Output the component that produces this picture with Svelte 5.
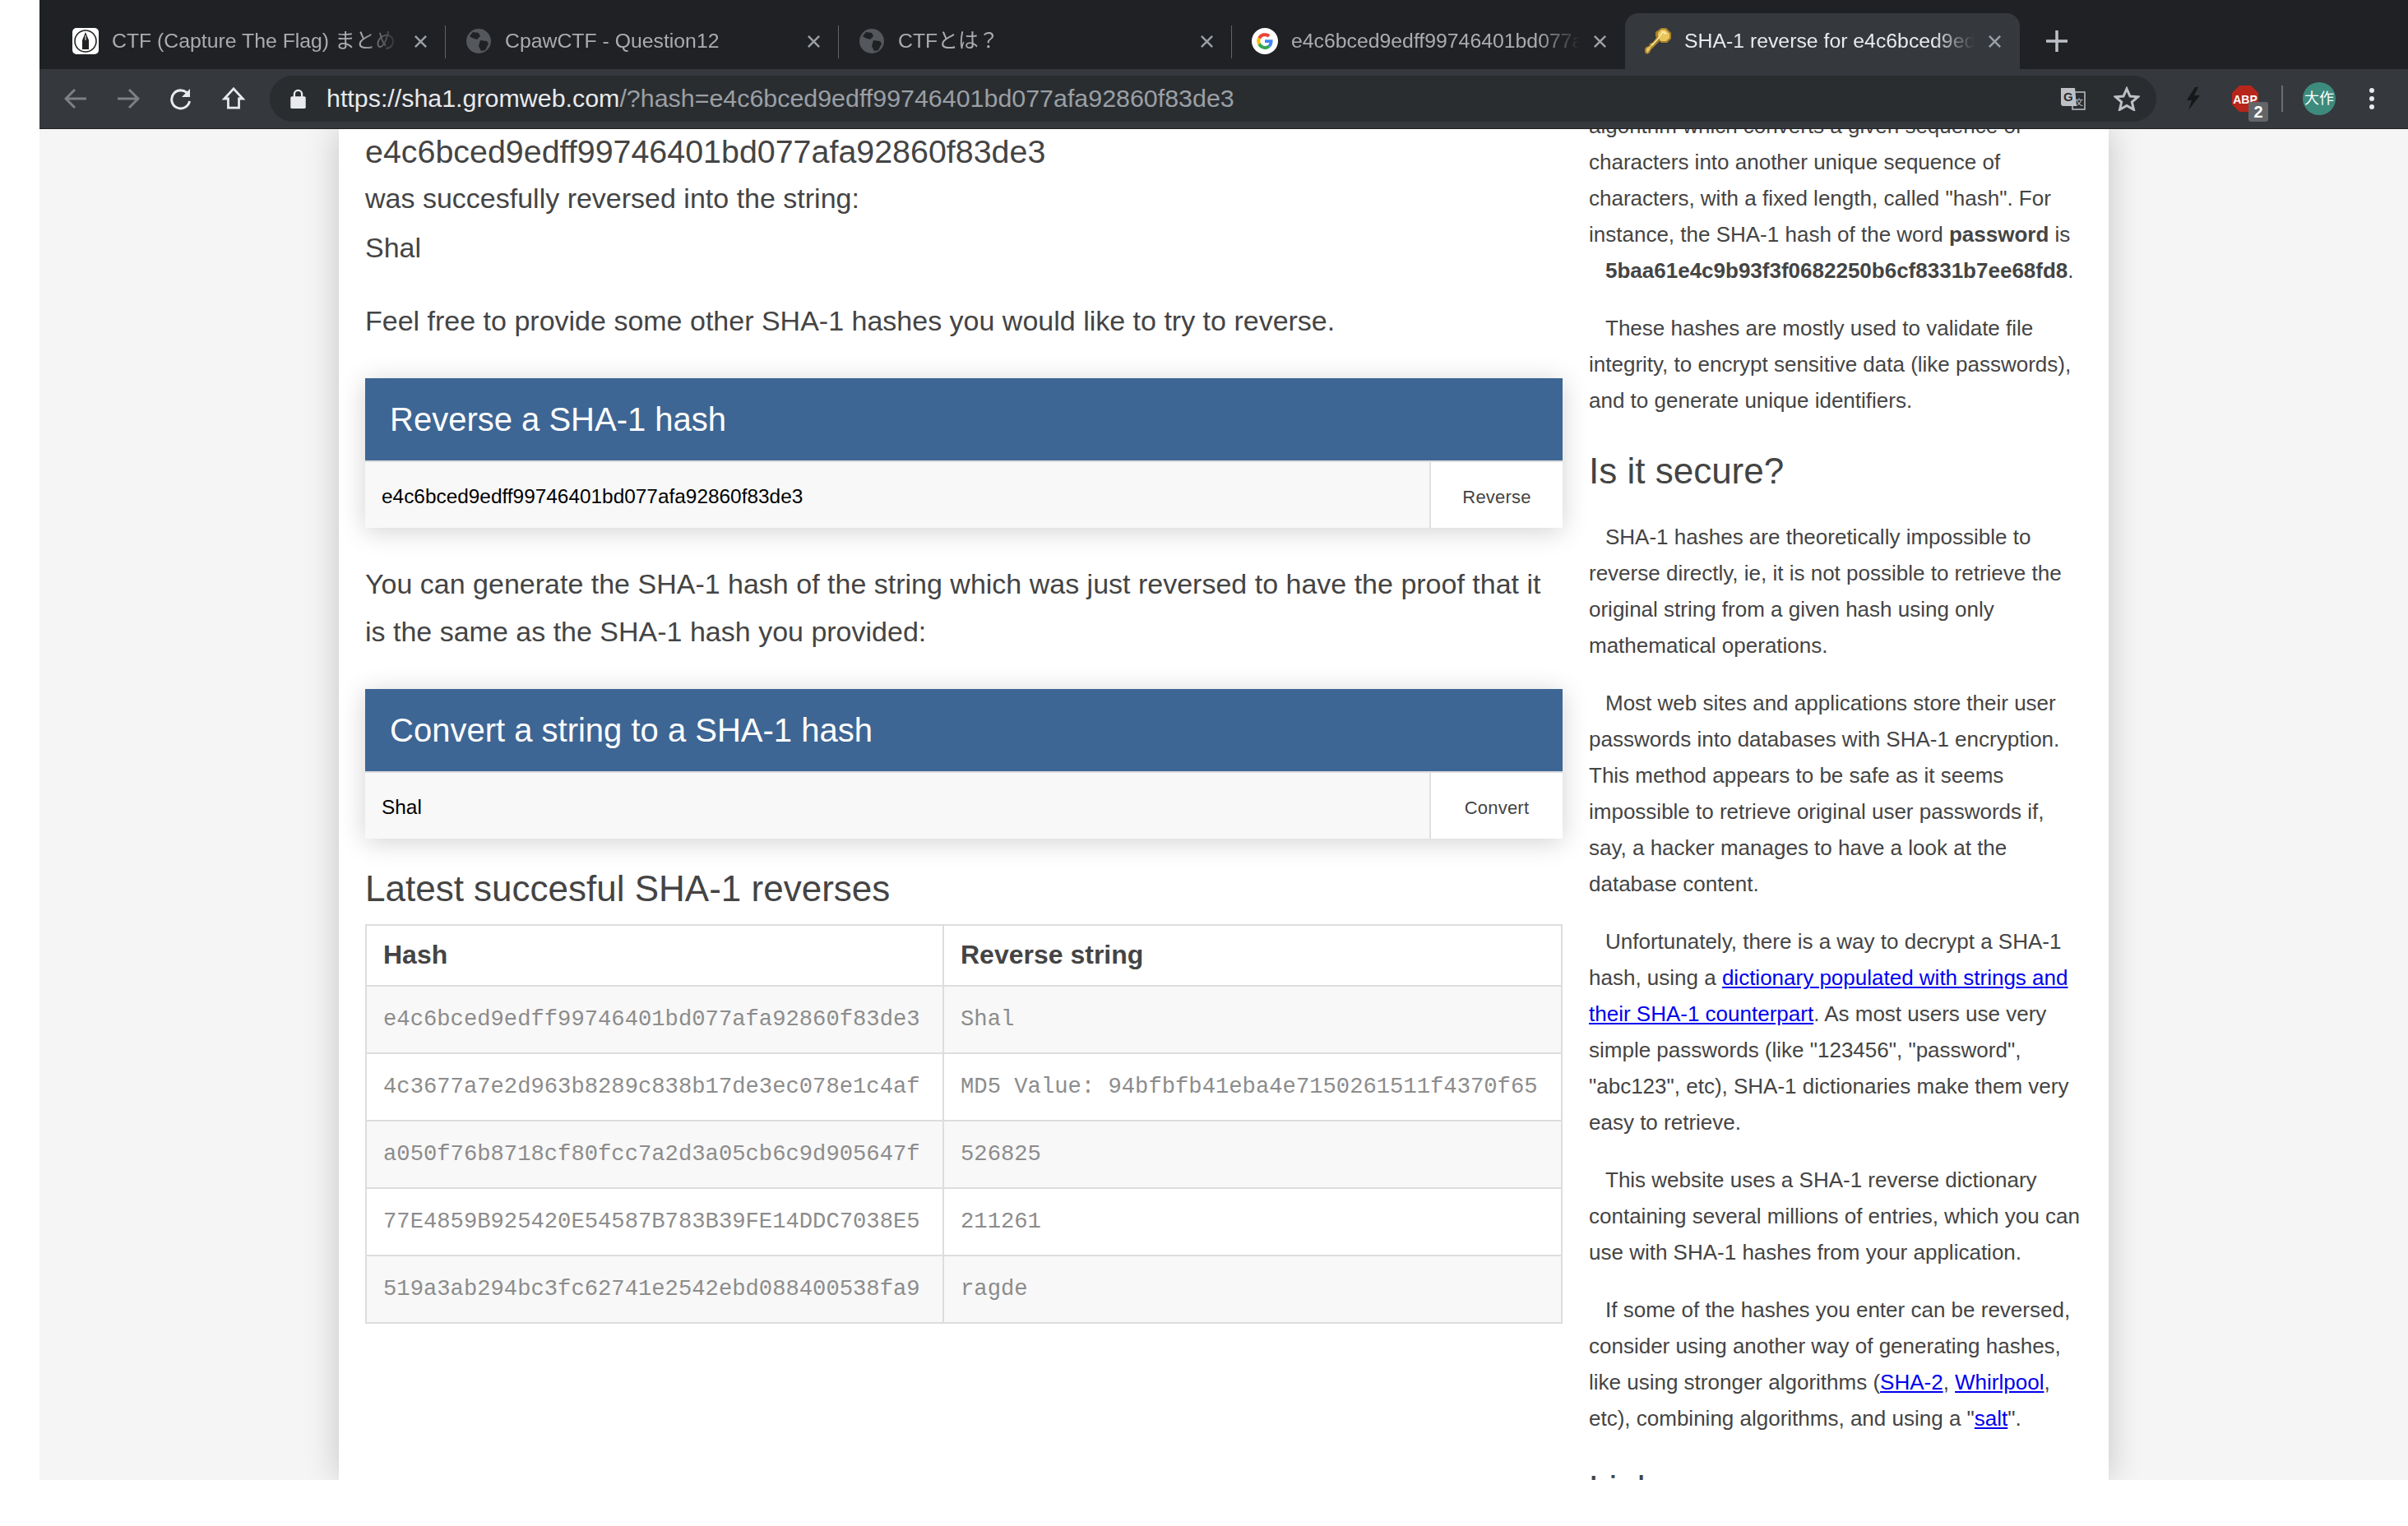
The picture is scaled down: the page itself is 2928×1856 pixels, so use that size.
<script>
	const tabs = [
		{ title: 'CTF (Capture The Flag) まとめ - Qiita', icon: 'pen' },
		{ title: 'CpawCTF - Question12', icon: 'globe' },
		{ title: 'CTFとは？', icon: 'globe' },
		{ title: 'e4c6bced9edff99746401bd077afa92860f83de3', icon: 'google' },
		{ title: 'SHA-1 reverse for e4c6bced9edff99746401bd077afa92860f83de3', icon: 'key', active: true }
	];

	const rows = [
		['e4c6bced9edff99746401bd077afa92860f83de3', 'Shal'],
		['4c3677a7e2d963b8289c838b17de3ec078e1c4af', 'MD5 Value: 94bfbfb41eba4e7150261511f4370f65'],
		['a050f76b8718cf80fcc7a2d3a05cb6c9d905647f', '526825'],
		['77E4859B925420E54587B783B39FE14DDC7038E5', '211261'],
		['519a3ab294bc3fc62741e2542ebd088400538fa9', 'ragde']
	];
</script>

<div class="screen">
	<div class="browser">
		<div class="tabstrip">
			{#each tabs as tab}
				<div class="tab" class:active={tab.active}>
					<svg class="favicon" viewBox="0 0 32 32">
						{#if tab.icon === 'pen'}
							<rect width="32" height="32" rx="5" fill="#fff" />
							<circle cx="16" cy="16" r="13" fill="none" stroke="#222" stroke-width="1.600" />
							<path d="M16 5l4 10v11h-8V15z" fill="#222" />
							<path d="M16 9v6" stroke="#fff" stroke-width="1" />
						{:else if tab.icon === 'globe'}
							<circle cx="16" cy="16" r="15" fill="#54575b" />
							<path d="M9 5l7 1 2 4-4 4-6-2-3-2zM18 15l8 1 2 3-4 8-5 1-3-6z" fill="#202124" />
						{:else if tab.icon === 'google'}
							<circle cx="16" cy="16" r="16" fill="#fff" />
							<path d="M7.500 11.300A9.800 9.800 0 0 1 22.500 8.600l-2.800 2.800a5.800 5.800 0 0 0-8.900 2.300z" fill="#ea4335" />
							<path d="M7.500 11.300l3.300 2.400a5.800 5.800 0 0 0 0 4.600l-3.300 2.400a9.800 9.800 0 0 1 0-9.400z" fill="#fbbc05" />
							<path d="M7.500 20.700l3.300-2.400a5.800 5.800 0 0 0 8.600 2.800l3.200 2.500a9.800 9.800 0 0 1-15.100-2.900z" fill="#34a853" />
							<path d="M25.600 14.200H16v3.900h5.500a4.900 4.900 0 0 1-2.100 3l3.200 2.500c1.900-1.800 3.200-4.600 3-9.400z" fill="#4285f4" />
						{:else}
							<path d="M20 0h6l6 6v7l-5 5h-7l-2-2L7 27l-1 3-3 2-3-2v-5l2-2 3-1 1-3 3-1 5-6-1-2V5z" fill="#a8822b" />
							<path d="M20 2h5l5 5v5l-4 4h-6l-3-3L7 24l-1 3-3 3-1-1v-4l3-2 2-1 1-3 3-1 6-7-1-2V6z" fill="#e9c65c" />
							<path d="M21 4h3l3 3-2 1-3-2-6 8-7 8-1-1 7-8 5-7z" fill="#f8eaa8" />
						{/if}
					</svg>
					<span class="title">{tab.title}</span>
					<svg class="close" viewBox="0 0 18 18"><path d="M2 2l14 14M16 2L2 16" /></svg>
				</div>
			{/each}
			<svg class="plus" viewBox="0 0 26 26"><path d="M13 0v26M0 13h26" /></svg>
		</div>

		<div class="toolbar">
			<svg class="nav dim" viewBox="0 0 28 26"><path d="M27 13H3M13 2L2 13l11 11" /></svg>
			<svg class="nav dim" viewBox="0 0 28 26"><path d="M1 13h24M15 2l11 11-11 11" /></svg>
			<svg class="nav" viewBox="0 0 28 28"><path d="M23 9a11 11 0 1 0 1.500 8" /><path class="fill" d="M25 2v10H15z" /></svg>
			<svg class="nav" viewBox="0 0 28 30"><path d="M14 2L2 15h5v12h14V15h5z" /></svg>

			<div class="omnibox">
				<svg class="lock" viewBox="0 0 20 26"><path d="M5 11V7a5 5 0 0 1 10 0v4" fill="none" stroke="#e8eaed" stroke-width="2.500" /><rect y="10" width="20" height="16" rx="2" fill="#e8eaed" /></svg>
				<span class="url"><b>https://sha1.gromweb.com</b>/?hash=e4c6bced9edff99746401bd077afa92860f83de3</span>
				<svg class="translate" viewBox="0 0 30 30">
					<rect x="14" y="7" width="15" height="21" fill="#2a2d30" stroke="#bdc1c6" stroke-width="1.500" />
					<path d="M0 2h17l2 22H3a3 3 0 0 1-3-3z" fill="#bdc1c6" />
					<text x="3" y="18" class="translate-g">G</text>
					<text x="17" y="23" class="translate-t">文</text>
				</svg>
				<svg class="star" viewBox="0 0 32 30"><path d="M16 3l4 9 9.500.8-7.200 6.200 2.200 9.300L16 23.400l-8.500 4.900 2.200-9.300-7.200-6.200L12 12z" /></svg>
			</div>

			<svg class="bolt" viewBox="0 0 18 28"><path d="M11 0L1 16h6L3 28l14-18h-7l5-10z" fill="#17181a" /></svg>
			<div class="abp">
				<svg viewBox="0 0 32 32"><path d="M9 0h14l9 9v14l-9 9H9l-9-9V9z" fill="#b8261b" /><text x="16" y="22" class="abp-text">ABP</text></svg>
				<span class="badge">2</span>
			</div>
			<span class="sep"></span>
			<span class="avatar">大作</span>
			<div class="dots"><i></i><i></i><i></i></div>
		</div>

		<div class="page">
			<div class="sheet">
				<main class="main">
					<div class="hash-line">e4c6bced9edff99746401bd077afa92860f83de3</div>
					<div class="line">was succesfully reversed into the string:</div>
					<div class="line">Shal</div>
					<p class="lead">Feel free to provide some other SHA-1 hashes you would like to try to reverse.</p>

					<div class="panel">
						<div class="panel-head">Reverse a SHA-1 hash</div>
						<div class="panel-body">
							<span class="field">e4c6bced9edff99746401bd077afa92860f83de3</span>
							<span class="action">Reverse</span>
						</div>
					</div>

					<p class="proof">You can generate the SHA-1 hash of the string which was just reversed to have the proof that it is the same as the SHA-1 hash you provided:</p>

					<div class="panel">
						<div class="panel-head">Convert a string to a SHA-1 hash</div>
						<div class="panel-body">
							<span class="field">Shal</span>
							<span class="action">Convert</span>
						</div>
					</div>

					<h2 class="latest">Latest succesful SHA-1 reverses</h2>
					<table>
						<thead>
							<tr><th class="first">Hash</th><th>Reverse string</th></tr>
						</thead>
						<tbody>
							{#each rows as row}
								<tr><td>{row[0]}</td><td>{row[1]}</td></tr>
							{/each}
						</tbody>
					</table>
				</main>

				<aside class="side">
					<p class="cut">algorithm which converts a given sequence of characters into another unique sequence of characters, with a fixed length, called "hash". For instance, the SHA-1 hash of the word <strong>password</strong> is<br /><strong class="pw">5baa61e4c9b93f3f0682250b6cf8331b7ee68fd8</strong>.</p>
					<p>These hashes are mostly used to validate file integrity, to encrypt sensitive data (like passwords), and to generate unique identifiers.</p>
					<h2>Is it secure?</h2>
					<p>SHA-1 hashes are theoretically impossible to reverse directly, ie, it is not possible to retrieve the original string from a given hash using only mathematical operations.</p>
					<p>Most web sites and applications store their user passwords into databases with SHA-1 encryption. This method appears to be safe as it seems impossible to retrieve original user passwords if, say, a hacker manages to have a look at the database content.</p>
					<p>Unfortunately, there is a way to decrypt a SHA-1 hash, using a <a href="#top">dictionary populated with strings and their SHA-1 counterpart</a>. As most users use very simple passwords (like "123456", "password", "abc123", etc), SHA-1 dictionaries make them very easy to retrieve.</p>
					<p>This website uses a SHA-1 reverse dictionary containing several millions of entries, which you can use with SHA-1 hashes from your application.</p>
					<p>If some of the hashes you enter can be reversed, consider using another way of generating hashes, like using stronger algorithms (<a href="#top">SHA-2</a>, <a href="#top">Whirlpool</a>, etc), combining algorithms, and using a "<a href="#top">salt</a>".</p>
					<h2>Links</h2>
				</aside>
			</div>
		</div>
	</div>
</div>

<style>
	:global(body) {
		margin: 0;
		background: #fff;
	}

	.screen {
		width: 2928px;
		height: 1856px;
		padding-left: 48px;
		box-sizing: border-box;
		background: #fff;
		font-family: 'Liberation Sans', Arial, 'Noto Sans CJK JP', sans-serif;
		overflow: hidden;
	}

	.browser {
		height: 1800px;
		display: flex;
		flex-direction: column;
	}

	/* Tab strip */
	.tabstrip {
		height: 84px;
		flex: none;
		box-sizing: border-box;
		padding: 16px 0 0 16px;
		display: flex;
		background: #202124;
	}

	.tab {
		width: 478px;
		height: 68px;
		flex: none;
		box-sizing: border-box;
		position: relative;
		display: flex;
		align-items: center;
		padding: 0 22px 0 24px;
		color: #a9acb0;
		font-size: 24.800px;
		line-height: 30px;
	}

	.tab::after {
		content: '';
		position: absolute;
		right: 0;
		top: 15px;
		height: 40px;
		width: 1px;
		background: #5f6368;
	}

	.tab:nth-child(4)::after,
	.tab.active::after {
		display: none;
	}

	.tab.active {
		background: #35383c;
		border-radius: 16px 16px 0 0;
		color: #e8eaed;
		width: 480px;
	}

	.favicon {
		width: 32px;
		height: 32px;
		flex: none;
		margin-right: 16px;
	}

	.title {
		flex: 1;
		min-width: 0;
		white-space: nowrap;
		overflow: hidden;
		mask-image: linear-gradient(to right, #000 86%, transparent 100%);
	}

	.close {
		width: 17px;
		height: 17px;
		flex: none;
		margin-left: 16px;
		fill: none;
		stroke: #9aa0a6;
		stroke-width: 2.600;
	}

	.plus {
		width: 26px;
		height: 26px;
		margin: 21px 0 0 32px;
		fill: none;
		stroke: #bdc1c6;
		stroke-width: 3.500;
	}

	/* Toolbar */
	.toolbar {
		height: 73px;
		flex: none;
		box-sizing: border-box;
		padding: 8px 0 9px 30px;
		display: flex;
		align-items: center;
		background: #35383c;
		border-bottom: 1px solid #202124;
	}

	.nav {
		width: 28px;
		height: 28px;
		flex: none;
		margin-right: 36px;
		fill: none;
		stroke: #e8eaed;
		stroke-width: 3;
	}

	.nav.dim {
		stroke: #7d8084;
	}

	.nav .fill {
		fill: #e8eaed;
		stroke: none;
	}

	.omnibox {
		width: 2294px;
		height: 56px;
		margin-left: -6px;
		flex: none;
		box-sizing: border-box;
		padding: 0 20px 0 25px;
		display: flex;
		align-items: center;
		background: #2a2d30;
		border-radius: 28px;
	}

	.lock {
		width: 19px;
		height: 24px;
		flex: none;
		margin-right: 25px;
	}

	.url {
		flex: 1;
		color: #9aa0a6;
		font-size: 30.400px;
		white-space: nowrap;
	}

	.url b {
		font-weight: 400;
		color: #e8eaed;
	}

	.translate {
		width: 30px;
		height: 30px;
		flex: none;
		margin-right: 34px;
	}

	.translate-g {
		font-size: 15px;
		font-weight: 700;
		fill: #2a2d30;
	}

	.translate-t {
		font-size: 10px;
		fill: #bdc1c6;
	}

	.star {
		width: 32px;
		height: 30px;
		flex: none;
		fill: none;
		stroke: #bdc1c6;
		stroke-width: 3;
	}

	.bolt {
		width: 18px;
		height: 28px;
		flex: none;
		margin-left: 36px;
	}

	.abp {
		width: 32px;
		height: 32px;
		flex: none;
		margin-left: 38px;
		position: relative;
	}

	.abp svg {
		display: block;
	}

	.abp-text {
		font-size: 14px;
		font-weight: 700;
		fill: #fff;
		text-anchor: middle;
	}

	.badge {
		position: absolute;
		left: 20px;
		top: 20px;
		width: 24px;
		height: 24px;
		border-radius: 3px;
		background: #636569;
		color: #fff;
		font-size: 20px;
		font-weight: 700;
		line-height: 24px;
		text-align: center;
	}

	.sep {
		width: 2px;
		height: 32px;
		flex: none;
		margin-left: 28px;
		background: #6b6e72;
	}

	.avatar {
		width: 40px;
		height: 40px;
		flex: none;
		margin-left: 24px;
		border-radius: 50%;
		background: #3d8b7d;
		color: #fff;
		font-size: 18px;
		line-height: 40px;
		text-align: center;
	}

	.dots {
		margin-left: 41px;
		display: flex;
		flex-direction: column;
		gap: 4px;
	}

	.dots i {
		width: 6px;
		height: 6px;
		border-radius: 50%;
		background: #e8eaed;
	}

	/* Page */
	.page {
		flex: 1;
		min-height: 0;
		overflow: hidden;
		background: #f5f5f5;
	}

	.sheet {
		width: 2152px;
		height: 100%;
		margin-left: 364px;
		box-sizing: border-box;
		padding: 0 32px;
		display: flex;
		gap: 32px;
		background: #fff;
		box-shadow: 0 0 40px rgba(0, 0, 0, 0.2);
		color: #444;
	}

	.main {
		width: 1456px;
		flex: none;
	}

	.hash-line {
		font-size: 39.400px;
		line-height: 54px;
	}

	.line {
		font-size: 34px;
		line-height: 60px;
	}

	.lead {
		margin: 30px 0 41px;
		font-size: 34px;
		line-height: 58px;
	}

	.panel {
		box-shadow: 0 4px 30px rgba(0, 0, 0, 0.18);
		background: #f8f8f8;
	}

	.panel-head {
		height: 100px;
		padding-left: 30px;
		border-bottom: 2px solid #ddd;
		background: #3e6694;
		color: #fff;
		font-size: 40px;
		line-height: 100px;
	}

	.panel-body {
		height: 80px;
		display: flex;
		align-items: center;
	}

	.field {
		flex: 1;
		padding: 3px 0 0 20px;
		color: #000;
		font-size: 24.400px;
	}

	.action {
		width: 162px;
		height: 100%;
		flex: none;
		box-sizing: border-box;
		padding-top: 3px;
		border-left: 2px solid #e0e0e0;
		background: #fff;
		color: #444;
		font-size: 22px;
		letter-spacing: 0.2px;
		line-height: 80px;
		text-align: center;
	}

	.proof {
		margin: 39px 0 41px;
		font-size: 34px;
		line-height: 58px;
	}

	.latest {
		margin: 31px 0 13px;
		font-size: 44px;
		font-weight: 400;
		line-height: 60px;
	}

	table {
		width: 100%;
		border-collapse: collapse;
		table-layout: fixed;
	}

	th,
	td {
		border: 2px solid #ddd;
		padding: 0 20px 2px;
		text-align: left;
	}

	th {
		height: 70px;
		font-size: 32px;
	}

	.first {
		width: 660px;
	}

	td {
		height: 78px;
		font-family: 'Liberation Mono', 'Courier New', monospace;
		font-size: 27.200px;
		color: #8c8c8c;
		white-space: nowrap;
	}

	tbody tr:nth-child(odd) {
		background: #f8f8f8;
	}

	/* Right column */
	.side {
		flex: 1;
		min-width: 0;
		margin-top: -26px;
		font-size: 26px;
		line-height: 44px;
	}

	.side p {
		margin: 0 0 26px;
		text-indent: 20px;
	}

	.side p.cut {
		text-indent: 0;
	}

	.pw {
		margin-left: 20px;
	}

	.side h2 {
		margin: 34px 0 28px;
		font-size: 44px;
		font-weight: 400;
		line-height: 60px;
	}

	.side a {
		color: #00e;
		text-decoration: underline;
	}
</style>
